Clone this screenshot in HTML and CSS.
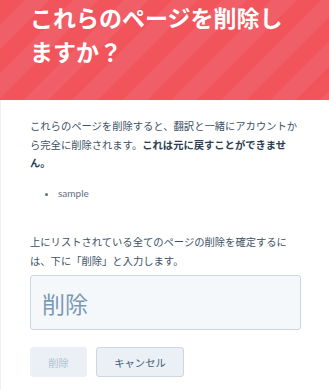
FILE: index.html
```html
<!DOCTYPE html>
<html lang="ja">
<head>
<meta charset="utf-8">
<link rel="stylesheet" href="styles.css">
</head>
<body>
<div class="dialog">
  <header class="dialog-header">
    <h1 class="dialog-title">これらのページを削除しますか？</h1>
  </header>
  <div class="dialog-body">
    <p class="lead">これらのページを削除すると、翻訳と一緒にアカウントから完全に削除されます。<strong>これは元に戻すことができません。</strong></p>
    <ul class="page-list">
      <li>sample</li>
    </ul>
    <p class="confirm">上にリストされている全てのページの削除を確定するには、下に「削除」と入力します。</p>
    <input class="confirm-input" type="text" placeholder="削除">
    <div class="actions">
      <button class="btn btn-delete" disabled>削除</button>
      <button class="btn btn-cancel">キャンセル</button>
    </div>
  </div>
</div>
</body>
</html>
```

FILE: styles.css
```css
html, body {
  margin: 0;
  padding: 0;
  background: #ffffff;
}
body {
  font-family: "Noto Sans CJK JP", "Noto Sans", sans-serif;
  color: #33475b;
}
.dialog {
  width: 329px;
  height: 390px;
  overflow: hidden;
}
.dialog-header {
  height: 100px;
  box-sizing: border-box;
  padding: 0 28px 0 30px;
  background: repeating-linear-gradient(135deg, #f2545b 0 17px, #f05f67 17px 35px);
}
.dialog-title {
  margin: 0;
  font-size: 23px;
  line-height: 34px;
  font-weight: 700;
  color: #ffffff;
}
.dialog-body {
  height: 290px;
  box-sizing: border-box;
  border-left: 1px solid #eef0f3;
  padding: 17px 28px 0 29px;
}
.lead,
.confirm {
  margin: 0;
  font-size: 10.3px;
  line-height: 18.5px;
  color: #3d5166;
}
.lead strong {
  font-weight: 700;
  color: #2d3e50;
}
.page-list {
  margin: 11px 0 0 0;
  padding-left: 28px;
  font-family: "Lato", "Noto Sans", sans-serif;
  font-size: 10px;
  line-height: 18.5px;
  color: #5f6f80;
}
.confirm {
  margin-top: 31px;
}
.confirm-input {
  display: block;
  margin-top: 5px;
  width: 271px;
  height: 55px;
  box-sizing: border-box;
  padding: 0 11px;
  background: #f5f8fa;
  border: 1px solid #cbd6e2;
  border-radius: 3px;
  font-family: "Noto Sans CJK JP", "Noto Sans", sans-serif;
  font-size: 23px;
  color: #33475b;
  outline: none;
}
.confirm-input::placeholder {
  color: #7c98b6;
}
.actions {
  display: flex;
  gap: 9px;
  margin-top: 17px;
}
.btn {
  height: 30px;
  box-sizing: border-box;
  border-radius: 3px;
  font-family: "Noto Sans CJK JP", "Noto Sans", sans-serif;
  font-size: 10.3px;
  padding: 0;
}
.btn-delete {
  width: 57px;
  background: #eaf0f6;
  border: 1px solid #eaf0f6;
  color: #b0c1d4;
}
.btn-cancel {
  width: 88px;
  background: #eaf0f6;
  border: 1px solid #cbd6e2;
  color: #425b76;
}
```
